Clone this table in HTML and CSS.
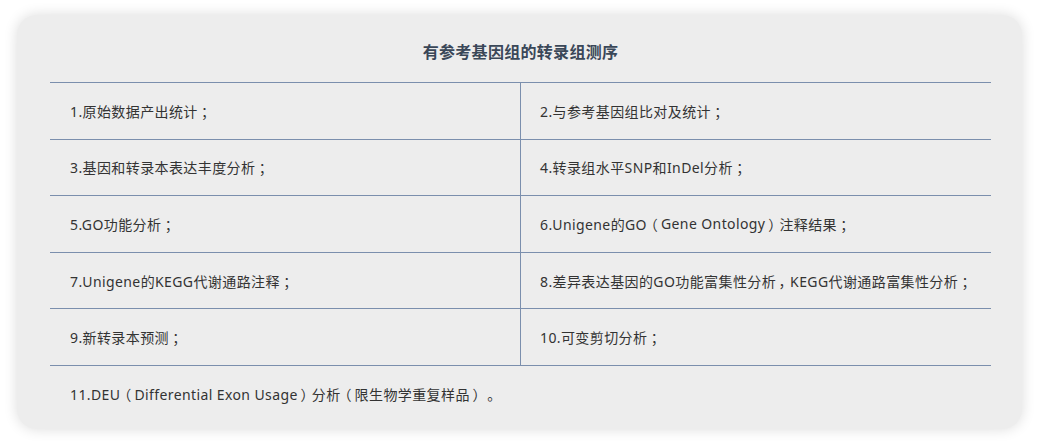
FILE: index.html
```html
<!DOCTYPE html>
<html lang="zh-CN">
<head>
<meta charset="utf-8">
<title>有参考基因组的转录组测序</title>
<link rel="stylesheet" href="styles.css">
</head>
<body>
<div class="card">
  <h2 class="title">有参考基因组的转录组测序</h2>
  <div class="grid">
    <div class="cell">1.原始数据产出统计<span class="fw">；</span></div>
    <div class="cell right">2.与参考基因组比对及统计<span class="fw">；</span></div>
    <div class="cell">3.基因和转录本表达丰度分析<span class="fw">；</span></div>
    <div class="cell right">4.转录组水平SNP和InDel分析<span class="fw">；</span></div>
    <div class="cell">5.GO功能分析<span class="fw">；</span></div>
    <div class="cell right">6.Unigene的GO<span class="fw">（</span>Gene Ontology<span class="fw">）</span>注释结果<span class="fw">；</span></div>
    <div class="cell">7.Unigene的KEGG代谢通路注释<span class="fw">；</span></div>
    <div class="cell right">8.差异表达基因的GO功能富集性分析<span class="fw">，</span>KEGG代谢通路富集性分析<span class="fw">；</span></div>
    <div class="cell">9.新转录本预测<span class="fw">；</span></div>
    <div class="cell right">10.可变剪切分析<span class="fw">；</span></div>
    <div class="cell full">11.DEU<span class="fw">（</span>Differential Exon Usage<span class="fw">）</span>分析<span class="fw">（</span>限生物学重复样品<span class="fw">）</span><span class="fw">。</span></div>
  </div>
</div>
</body>
</html>
```

FILE: styles.css
```css
html, body {
  margin: 0;
  padding: 0;
  background: #ffffff;
}
body {
  padding: 15px 18px 16px 17px;
  font-family: "Noto Sans", "Noto Sans CJK SC", sans-serif;
}
.card {
  background: #ededed;
  border-radius: 20px;
  box-shadow: 0 0 14px rgba(0, 0, 0, 0.14);
  height: 414px;
  box-sizing: border-box;
  padding: 0 31px 0 33px;
}
.title {
  margin: 0;
  padding-top: 26px;
  height: 22px;
  line-height: 22px;
  margin-bottom: 19px;
  text-align: center;
  font-size: 16px;
  font-weight: bold;
  letter-spacing: 0.3px;
  color: #3a4758;
}
.grid {
  display: grid;
  grid-template-columns: 470px 1fr;
  border-top: 1px solid #7b8fad;
}
.cell {
  height: 56.6px;
  box-sizing: border-box;
  border-bottom: 1px solid #7b8fad;
  display: flex;
  align-items: center;
  padding-left: 20px;
  font-size: 14px;
  letter-spacing: 0.4px;
  color: #333333;
  white-space: nowrap;
}
.cell.right {
  border-left: 1px solid #7b8fad;
  padding-left: 19px;
}
.cell.full {
  grid-column: 1 / 3;
  border-bottom: none;
}
.fw {
  display: inline-block;
  width: 1em;
  text-align: center;
  font-feature-settings: "palt";
}
```
